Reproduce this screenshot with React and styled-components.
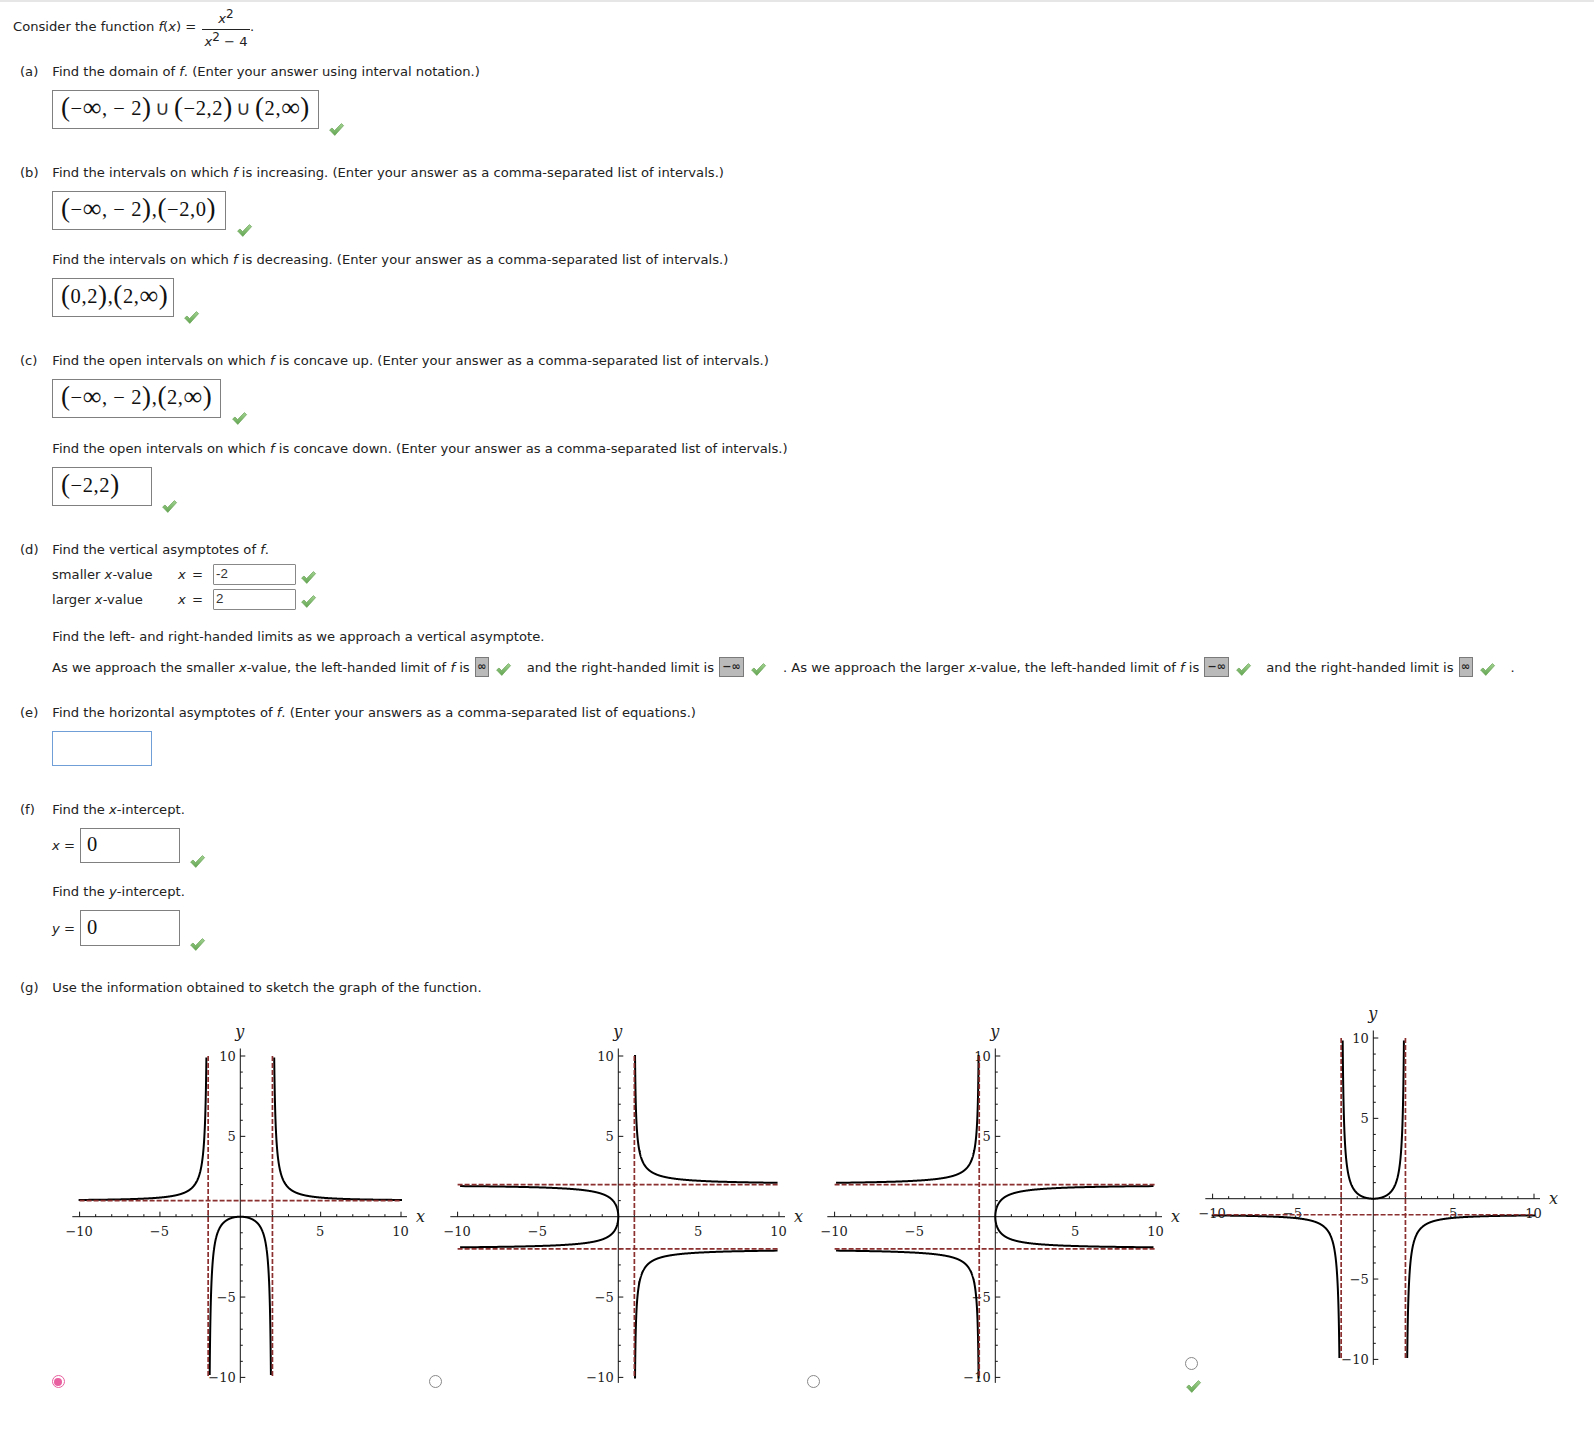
import React from 'react';
import styled, { createGlobalStyle } from 'styled-components';

const GlobalStyle = createGlobalStyle`
  body {
    margin: 0;
    background: #fff;
    color: #222;
    font-family: "DejaVu Sans", Verdana, sans-serif;
    font-size: 13.13px;
    line-height: 16px;
  }
`;

const TopRule = styled.div`
  height: 2px;
  background: #e6e6e6;
`;

const Intro = styled.div`
  display: flex;
  align-items: flex-start;
  height: 40px;
  margin: 6px 0 0 13px;
`;

const Lead = styled.span`
  margin-top: 10.5px;
  width: 189px;
  white-space: nowrap;
`;

const Fraction = styled.span`
  display: flex;
  flex-direction: column;
  align-items: center;
  width: 48px;
`;

const Numerator = styled.span`
  height: 20.5px;
  line-height: 22px;
`;

const Denominator = styled.span`
  height: 18px;
  border-top: 1px solid #222;
  width: 100%;
  text-align: center;
  white-space: nowrap;
  line-height: 24px;
`;

const Dot = styled.span`
  margin-top: 11px;
`;

const Sup = styled.sup`
  font-size: 12px;
  line-height: 0;
`;

const Prompt = styled.div`
  display: flex;
  height: 16px;
  margin-top: ${p => p.$top}px;
  margin-left: ${p => (p.$label ? 20 : 52.3)}px;
  white-space: nowrap;
`;

const PartLabel = styled.span`
  width: 32.3px;
`;

const AnswerRow = styled.div`
  display: flex;
  align-items: flex-start;
  margin: ${p => p.$top}px 0 0 52px;
`;

const MathBox = styled.div`
  box-sizing: border-box;
  width: ${p => p.$w}px;
  height: ${p => p.$h}px;
  padding-left: ${p => p.$pad || 8}px;
  border: 1px solid #808080;
  font-family: "Liberation Serif", "Times New Roman", serif;
  font-size: 20.5px;
  letter-spacing: 0.6px;
  line-height: ${p => Math.floor(p.$h) - 4}px;
  white-space: nowrap;
  color: #111;
`;

const Paren = styled.span`
  font-size: 27px;
  line-height: 0;
  vertical-align: -1px;
`;

const Infinity_ = styled.span`
  font-size: 26px;
  line-height: 0;
  vertical-align: -1px;
`;

const Cup = styled.span`
  font-family: "DejaVu Sans", sans-serif;
  font-size: 20px;
  margin: 0 3.5px;
  color: #333;
`;

// wraps the glyphs that are drawn larger in the typeset answers
const MathText = ({ children }) =>
  children.split(/([()∞∪])/).map((part, i) => {
    if (part === '(' || part === ')') return <Paren key={i}>{part}</Paren>;
    if (part === '∞') return <Infinity_ key={i}>{part}</Infinity_>;
    if (part === '∪') return <Cup key={i}>{part}</Cup>;
    return part;
  });

const CheckSvg = styled.svg`
  flex: none;
  display: block;
  overflow: visible;
  width: 15px;
  height: 13px;
  margin-top: ${p => p.$top || 0}px;
  margin-left: ${p => p.$left || 0}px;
`;

const CheckMark = ({ top, left }) => (
  <CheckSvg $top={top} $left={left} viewBox="0 1 15 13">
    <defs>
      <linearGradient id="tick" x1="0" y1="0" x2="0" y2="1">
        <stop offset="0" stopColor="#a2d391" />
        <stop offset="1" stopColor="#62a551" />
      </linearGradient>
    </defs>
    <polygon
      points="0.6,7 3,5 5.6,7.6 12.4,0.6 14.6,2.6 5.8,12.4"
      fill="url(#tick)"
      stroke="#6aa457"
      strokeWidth="0.7"
    />
  </CheckSvg>
);

const AsymptoteRow = styled.div`
  display: flex;
  align-items: flex-start;
  height: 20px;
  margin: ${p => p.$top}px 0 0 52px;
`;

const RowLabel = styled.span`
  width: 126px;
  line-height: 21px;
`;

const RowEquals = styled.span`
  width: 35px;
  line-height: 21px;
  word-spacing: 2px;
`;

const SmallInput = styled.div`
  box-sizing: border-box;
  width: 83px;
  height: 20.5px;
  padding-left: 2px;
  border: 1px solid #888;
  border-radius: 1px;
  font-family: "Liberation Sans", Arial, sans-serif;
  font-size: 13.33px;
  line-height: 18px;
  color: #333;
`;

const Limits = styled.div`
  display: flex;
  align-items: center;
  height: 20px;
  margin: 12px 0 0 52px;
  white-space: nowrap;
`;

const LimitText = styled.span`
  margin-top: 2px;
  margin-left: ${p => p.$gap || 0}px;
  line-height: 20px;
`;

const Combo = styled.span`
  box-sizing: border-box;
  display: flex;
  align-items: center;
  justify-content: center;
  width: ${p => p.$w}px;
  height: 20.5px;
  margin-left: 5px;
  background: #bababa;
  border: 1px solid #7a7a7a;
  font-size: 11px;
  font-weight: bold;
`;

const EmptyInput = styled.input`
  display: block;
  box-sizing: border-box;
  width: 100px;
  height: 35px;
  margin: 10px 0 0 52px;
  border: 1px solid #6f9fd6;
  outline: none;
  background: #fff;
`;

const InterceptLabel = styled.span`
  width: 28px;
  margin-top: ${p => p.$top}px;
`;

const GraphGrid = styled.div`
  display: grid;
  grid-template-columns: repeat(4, 377.7px);
  align-items: end;
  margin: 7.6px 0 0 48px;
  padding-bottom: 64px;
`;

const Choice = styled.div`
  display: flex;
  flex-direction: column;
`;

const ChoiceRow = styled.div`
  display: flex;
  align-items: flex-end;
`;

const Radio = styled.span`
  flex: none;
  box-sizing: border-box;
  position: relative;
  width: 13px;
  height: 13px;
  margin: 0 3.5px;
  border-radius: 50%;
  border: ${p => (p.$on ? '1.2px solid #e8609f' : '1px solid #888')};
  background: #fff;

  ${p => p.$on && `
    &::after {
      content: '';
      position: absolute;
      inset: 1.5px;
      border-radius: 50%;
      background: #e8609f;
    }
  `}
`;

const CheckSlot = styled.div`
  height: 18.4px;
`;

const PlotSvg = styled.svg`
  flex: none;
  display: block;
  overflow: visible;

  text {
    font-family: "DejaVu Serif", "Liberation Serif", serif;
    font-size: 13px;
    fill: #222;
  }

  .axis-name {
    font-style: italic;
    font-size: 16px;
  }
`;

const CX = 172.3;
const CY = 194.7;
const UNIT = 16.07;
const px = x => CX + x * UNIT;
const py = y => CY - y * UNIT;

const f = t => (t * t) / (t * t - 4);

const plots = [
  { point: t => [t, f(t)], v: [-2, 2], h: [1], on: true },
  { point: t => [f(t), t], v: [1], h: [-2, 2] },
  { point: t => [-f(t), t], v: [-1], h: [-2, 2] },
  { point: t => [t, -f(t)], v: [-2, 2], h: [-1], checked: true },
];

// walks t over the whole range and breaks the line wherever the curve leaves the window
const curvePath = point => {
  let d = '';
  let pen = false;
  for (let i = -4000; i <= 4000; i++) {
    const [x, y] = point(i / 400);
    if (Math.abs(x) <= 10 && Math.abs(y) <= 10) {
      d += `${pen ? 'L' : 'M'}${px(x).toFixed(2)} ${py(y).toFixed(2)}`;
      pen = true;
    } else {
      pen = false;
    }
  }
  return d;
};

const steps = Array.from({ length: 21 }, (_, i) => i - 10);
const labelled = [-10, -5, 5, 10];
const tickLabel = n => (n < 0 ? `\u2212${-n}` : `${n}`);

const Plot = ({ point, v, h }) => (
  <PlotSvg width="370" height="366.5">
    <g stroke="#111" strokeWidth="1">
      <line x1={px(-10) - 7.3} y1={CY} x2={px(10) + 6} y2={CY} />
      <line x1={CX} y1={py(10) - 7.5} x2={CX} y2={py(-10) + 5.5} />
      {steps.filter(n => n !== 0).map(n => (
        <g key={n}>
          <line x1={px(n)} y1={CY} x2={px(n)} y2={CY - (n % 5 === 0 ? 5 : 2.5)} />
          <line x1={CX} y1={py(n)} x2={CX + (n % 5 === 0 ? 5 : 2.5)} y2={py(n)} />
        </g>
      ))}
    </g>
    {labelled.map(n => (
      <g key={n}>
        <text x={px(n) - 0.5} y={CY + 19} textAnchor="middle">{tickLabel(n)}</text>
        <text x={CX - 4.5} y={py(n) + 5} textAnchor="end">{tickLabel(n)}</text>
      </g>
    ))}
    <text className="axis-name" x={px(10) + 15} y={CY + 5}>x</text>
    <text className="axis-name" x={CX - 5} y={py(10) - 19}>y</text>
    <path d={curvePath(point)} fill="none" stroke="#000" strokeWidth="2" strokeLinecap="square" />
    <g stroke="#8c2f2f" strokeWidth="1.7" strokeDasharray="5 2">
      {v.map(x => <line key={x} x1={px(x)} y1={py(10)} x2={px(x)} y2={py(-10)} />)}
      {h.map(y => <line key={y} x1={px(-10)} y1={py(y)} x2={px(10)} y2={py(y)} />)}
    </g>
  </PlotSvg>
);

const X = () => <em>x</em>;
const Fn = () => <em>f</em>;

const App = () => (
  <>
    <GlobalStyle />
    <TopRule />
    <Intro>
      <Lead>Consider the function <Fn />(<X />) =</Lead>
      <Fraction>
        <Numerator><X /><Sup>2</Sup></Numerator>
        <Denominator><X /><Sup>2</Sup> &minus; 4</Denominator>
      </Fraction>
      <Dot>.</Dot>
    </Intro>

    <Prompt $label $top={16}><PartLabel>(a)</PartLabel><span>Find the domain of <Fn />. (Enter your answer using interval notation.)</span></Prompt>
    <AnswerRow $top={10}>
      <MathBox $w={267} $h={38.5}><MathText>{'(−∞, − 2)∪(−2,2)∪(2,∞)'}</MathText></MathBox>
      <CheckMark top={34} left={9.5} />
    </AnswerRow>

    <Prompt $label $top={28}><PartLabel>(b)</PartLabel><span>Find the intervals on which <Fn /> is increasing. (Enter your answer as a comma-separated list of intervals.)</span></Prompt>
    <AnswerRow $top={10}>
      <MathBox $w={174} $h={38.5}><MathText>{'(−∞, − 2),(−2,0)'}</MathText></MathBox>
      <CheckMark top={34} left={10.5} />
    </AnswerRow>

    <Prompt $top={14}>Find the intervals on which&nbsp;<Fn />&nbsp;is decreasing. (Enter your answer as a comma-separated list of intervals.)</Prompt>
    <AnswerRow $top={10}>
      <MathBox $w={122} $h={39}><MathText>{'(0,2),(2,∞)'}</MathText></MathBox>
      <CheckMark top={34} left={10} />
    </AnswerRow>

    <Prompt $label $top={28}><PartLabel>(c)</PartLabel><span>Find the open intervals on which <Fn /> is concave up. (Enter your answer as a comma-separated list of intervals.)</span></Prompt>
    <AnswerRow $top={10}>
      <MathBox $w={169} $h={39}><MathText>{'(−∞, − 2),(2,∞)'}</MathText></MathBox>
      <CheckMark top={34} left={10.5} />
    </AnswerRow>

    <Prompt $top={15}>Find the open intervals on which&nbsp;<Fn />&nbsp;is concave down. (Enter your answer as a comma-separated list of intervals.)</Prompt>
    <AnswerRow $top={10}>
      <MathBox $w={100} $h={38.5}><MathText>{'(−2,2)'}</MathText></MathBox>
      <CheckMark top={34} left={9.5} />
    </AnswerRow>

    <Prompt $label $top={28}><PartLabel>(d)</PartLabel><span>Find the vertical asymptotes of <Fn />.</span></Prompt>
    <AsymptoteRow $top={6}>
      <RowLabel>smaller <X />-value</RowLabel>
      <RowEquals><X /> =</RowEquals>
      <SmallInput>-2</SmallInput>
      <CheckMark top={8} left={5} />
    </AsymptoteRow>
    <AsymptoteRow $top={5}>
      <RowLabel>larger <X />-value</RowLabel>
      <RowEquals><X /> =</RowEquals>
      <SmallInput>2</SmallInput>
      <CheckMark top={7} left={5} />
    </AsymptoteRow>

    <Prompt $top={20}>Find the left- and right-handed limits as we approach a vertical asymptote.</Prompt>
    <Limits>
      <LimitText>As we approach the smaller <X />-value, the left-handed limit of <Fn /> is</LimitText>
      <Combo $w={14}>&infin;</Combo>
      <CheckMark top={6} left={7} />
      <LimitText $gap={16}>and the right-handed limit is</LimitText>
      <Combo $w={25}>&minus;&infin;</Combo>
      <CheckMark top={6} left={7} />
      <LimitText $gap={17}>. As we approach the larger <X />-value, the left-handed limit of <Fn /> is</LimitText>
      <Combo $w={25}>&minus;&infin;</Combo>
      <CheckMark top={6} left={7} />
      <LimitText $gap={15}>and the right-handed limit is</LimitText>
      <Combo $w={14}>&infin;</Combo>
      <CheckMark top={6} left={7} />
      <LimitText $gap={16}>.</LimitText>
    </Limits>

    <Prompt $label $top={28}><PartLabel>(e)</PartLabel><span>Find the horizontal asymptotes of <Fn />. (Enter your answers as a comma-separated list of equations.)</span></Prompt>
    <EmptyInput />

    <Prompt $label $top={36}><PartLabel>(f)</PartLabel><span>Find the <X />-intercept.</span></Prompt>
    <AnswerRow $top={10}>
      <InterceptLabel $top={10}><X /> =</InterceptLabel>
      <MathBox $w={100} $h={35} $pad={6}>0</MathBox>
      <CheckMark top={28} left={10} />
    </AnswerRow>

    <Prompt $top={15}>Find the&nbsp;<em>y</em>-intercept.</Prompt>
    <AnswerRow $top={10}>
      <InterceptLabel $top={11}><em>y</em> =</InterceptLabel>
      <MathBox $w={100} $h={36} $pad={6}>0</MathBox>
      <CheckMark top={29} left={10} />
    </AnswerRow>

    <Prompt $label $top={28}><PartLabel>(g)</PartLabel><span>Use the information obtained to sketch the graph of the function.</span></Prompt>
    <GraphGrid>
      {plots.map(plot => (
        <Choice key={plot.v.join() + plot.h.join()}>
          <ChoiceRow>
            <Radio $on={plot.on} />
            <Plot point={plot.point} v={plot.v} h={plot.h} />
          </ChoiceRow>
          {plot.checked && (
            <CheckSlot>
              <CheckMark top={10.5} left={4.5} />
            </CheckSlot>
          )}
        </Choice>
      ))}
    </GraphGrid>
  </>
);

export default App;
